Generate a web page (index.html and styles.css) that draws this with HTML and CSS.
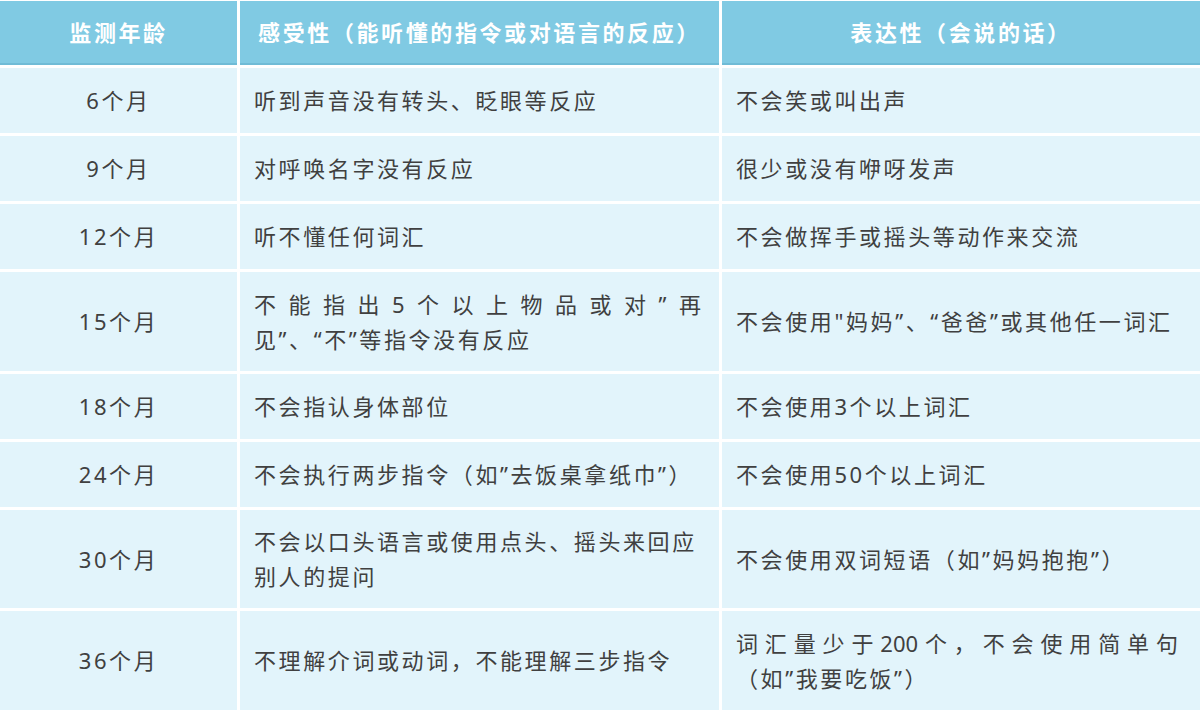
FILE: index.html
```html
<!DOCTYPE html>
<html lang="zh-CN">
<head>
<meta charset="utf-8">
<title>语言发育监测表</title>
<link rel="stylesheet" href="styles.css">
</head>
<body>
<div class="table">
  <div class="cell head">监测年龄</div>
  <div class="cell head">感受性（能听懂的指令或对语言的反应）</div>
  <div class="cell head">表达性（会说的话）</div>

  <div class="cell age">6个月</div>
  <div class="cell">听到声音没有转头、眨眼等反应</div>
  <div class="cell">不会笑或叫出声</div>

  <div class="cell age">9个月</div>
  <div class="cell">对呼唤名字没有反应</div>
  <div class="cell">很少或没有咿呀发声</div>

  <div class="cell age">12个月</div>
  <div class="cell">听不懂任何词汇</div>
  <div class="cell">不会做挥手或摇头等动作来交流</div>

  <div class="cell age">15个月</div>
  <div class="cell multi">
    <span class="line just">不能指出5个以上物品或对”再</span>
    <span class="line">见”、“不”等指令没有反应</span>
  </div>
  <div class="cell">不会使用"妈妈”、“爸爸”或其他任一词汇</div>

  <div class="cell age">18个月</div>
  <div class="cell">不会指认身体部位</div>
  <div class="cell">不会使用3个以上词汇</div>

  <div class="cell age">24个月</div>
  <div class="cell">不会执行两步指令（如”去饭桌拿纸巾”）</div>
  <div class="cell">不会使用50个以上词汇</div>

  <div class="cell age">30个月</div>
  <div class="cell multi">
    <span class="line">不会以口头语言或使用点头、摇头来回应</span>
    <span class="line">别人的提问</span>
  </div>
  <div class="cell">不会使用双词短语（如”妈妈抱抱”）</div>

  <div class="cell age">36个月</div>
  <div class="cell">不理解介词或动词，不能理解三步指令</div>
  <div class="cell multi narrow">
    <span class="line just">词汇量少于200个，不会使用简单句</span>
    <span class="line">（如”我要吃饭”）</span>
  </div>
</div>
</body>
</html>
```

FILE: styles.css
```css
html, body {
  margin: 0;
  padding: 0;
  background: #ffffff;
}

body {
  width: 1200px;
  height: 710px;
  overflow: hidden;
  font-family: "Noto Sans", "Noto Sans CJK SC", sans-serif;
}

.table {
  display: grid;
  grid-template-columns: 237px 479px 1fr;
  grid-template-rows: 64px 65px 65px 65px 99px 65px 65px 98px 1fr;
  gap: 3px;
  height: 709px;
  padding-top: 1px;
  background: #ffffff;
}

.cell {
  display: flex;
  align-items: center;
  padding: 0 14px;
  background: #e2f4fb;
  color: #404040;
  font-size: 22px;
  letter-spacing: 2.6px;
  line-height: 35px;
  white-space: nowrap;
}

.head {
  justify-content: center;
  background: #80cae3;
  border-bottom: 2px solid #6fbbd6;
  color: #ffffff;
  font-weight: 700;
  letter-spacing: 2.6px;
}

.age {
  justify-content: center;
}

.multi {
  flex-direction: column;
  align-items: stretch;
  justify-content: center;
  padding-right: 18px;
}

.narrow {
  padding-right: 22px;
}

.line {
  display: block;
}

.just {
  text-align: justify;
  text-align-last: justify;
  letter-spacing: 0;
}
```
